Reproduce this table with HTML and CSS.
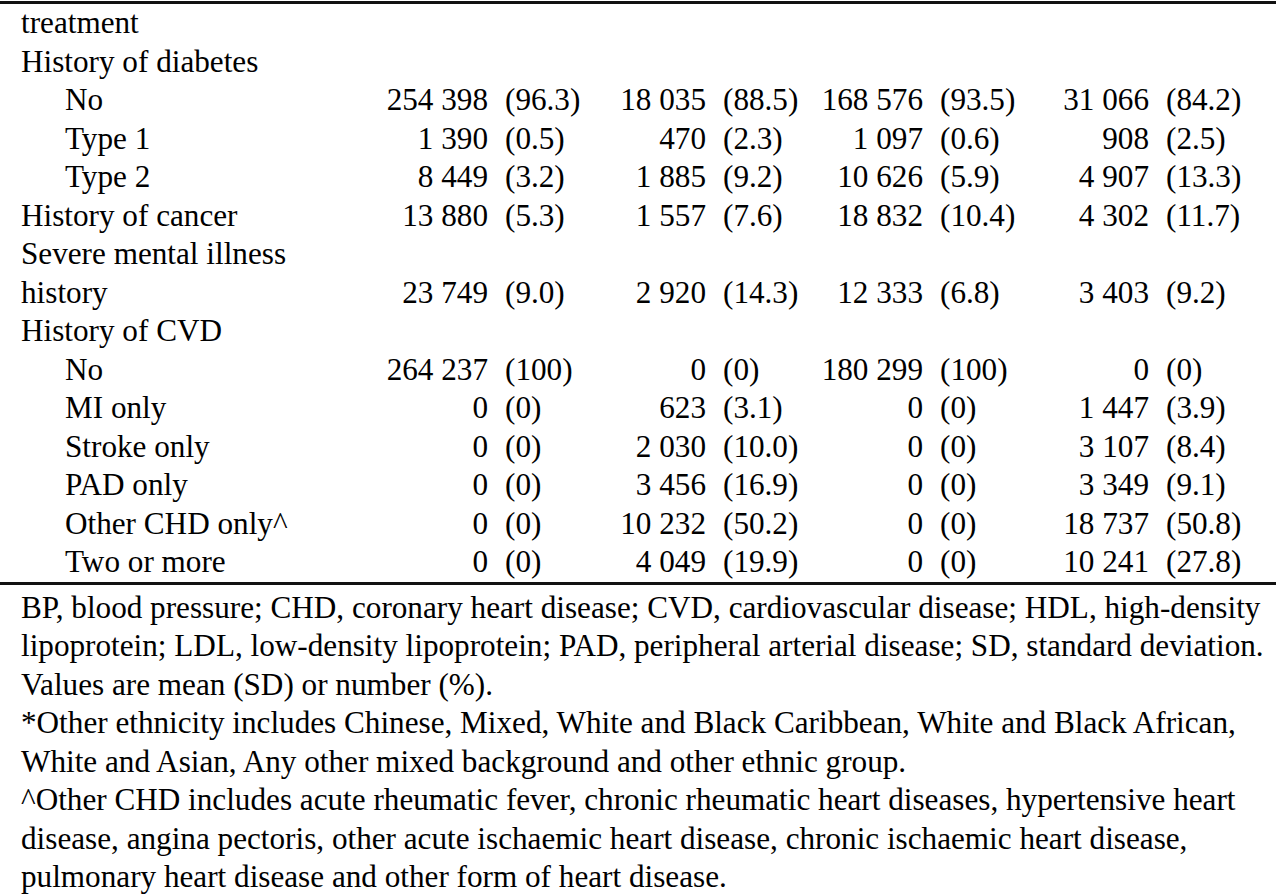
FILE: index.html
```
<!DOCTYPE html>
<html>
<head>
    <title>Baseline characteristics (continued)</title>
    <link rel="stylesheet" href="styles.css">
</head>
<body>
    <table class="data">
        <colgroup>
            <col class="c-label">
            <col class="c-n1"><col class="c-p1">
            <col class="c-n2"><col class="c-p2">
            <col class="c-n3"><col class="c-p3">
            <col class="c-n4"><col class="c-p4">
        </colgroup>
        <tbody>
            <tr><td class="label">treatment</td><td colspan="8"></td></tr>
            <tr><td class="label">History of diabetes</td><td colspan="8"></td></tr>
            <tr>
                <td class="label sub">No</td>
                <td class="num">254 398</td><td class="pct">(96.3)</td>
                <td class="num">18 035</td><td class="pct">(88.5)</td>
                <td class="num">168 576</td><td class="pct">(93.5)</td>
                <td class="num">31 066</td><td class="pct">(84.2)</td>
            </tr>
            <tr>
                <td class="label sub">Type 1</td>
                <td class="num">1 390</td><td class="pct">(0.5)</td>
                <td class="num">470</td><td class="pct">(2.3)</td>
                <td class="num">1 097</td><td class="pct">(0.6)</td>
                <td class="num">908</td><td class="pct">(2.5)</td>
            </tr>
            <tr>
                <td class="label sub">Type 2</td>
                <td class="num">8 449</td><td class="pct">(3.2)</td>
                <td class="num">1 885</td><td class="pct">(9.2)</td>
                <td class="num">10 626</td><td class="pct">(5.9)</td>
                <td class="num">4 907</td><td class="pct">(13.3)</td>
            </tr>
            <tr>
                <td class="label">History of cancer</td>
                <td class="num">13 880</td><td class="pct">(5.3)</td>
                <td class="num">1 557</td><td class="pct">(7.6)</td>
                <td class="num">18 832</td><td class="pct">(10.4)</td>
                <td class="num">4 302</td><td class="pct">(11.7)</td>
            </tr>
            <tr><td class="label">Severe mental illness</td><td colspan="8"></td></tr>
            <tr>
                <td class="label">history</td>
                <td class="num">23 749</td><td class="pct">(9.0)</td>
                <td class="num">2 920</td><td class="pct">(14.3)</td>
                <td class="num">12 333</td><td class="pct">(6.8)</td>
                <td class="num">3 403</td><td class="pct">(9.2)</td>
            </tr>
            <tr><td class="label">History of CVD</td><td colspan="8"></td></tr>
            <tr>
                <td class="label sub">No</td>
                <td class="num">264 237</td><td class="pct">(100)</td>
                <td class="num">0</td><td class="pct">(0)</td>
                <td class="num">180 299</td><td class="pct">(100)</td>
                <td class="num">0</td><td class="pct">(0)</td>
            </tr>
            <tr>
                <td class="label sub">MI only</td>
                <td class="num">0</td><td class="pct">(0)</td>
                <td class="num">623</td><td class="pct">(3.1)</td>
                <td class="num">0</td><td class="pct">(0)</td>
                <td class="num">1 447</td><td class="pct">(3.9)</td>
            </tr>
            <tr>
                <td class="label sub">Stroke only</td>
                <td class="num">0</td><td class="pct">(0)</td>
                <td class="num">2 030</td><td class="pct">(10.0)</td>
                <td class="num">0</td><td class="pct">(0)</td>
                <td class="num">3 107</td><td class="pct">(8.4)</td>
            </tr>
            <tr>
                <td class="label sub">PAD only</td>
                <td class="num">0</td><td class="pct">(0)</td>
                <td class="num">3 456</td><td class="pct">(16.9)</td>
                <td class="num">0</td><td class="pct">(0)</td>
                <td class="num">3 349</td><td class="pct">(9.1)</td>
            </tr>
            <tr>
                <td class="label sub">Other CHD only^</td>
                <td class="num">0</td><td class="pct">(0)</td>
                <td class="num">10 232</td><td class="pct">(50.2)</td>
                <td class="num">0</td><td class="pct">(0)</td>
                <td class="num">18 737</td><td class="pct">(50.8)</td>
            </tr>
            <tr>
                <td class="label sub">Two or more</td>
                <td class="num">0</td><td class="pct">(0)</td>
                <td class="num">4 049</td><td class="pct">(19.9)</td>
                <td class="num">0</td><td class="pct">(0)</td>
                <td class="num">10 241</td><td class="pct">(27.8)</td>
            </tr>
        </tbody>
    </table>

    <div class="notes">
        <p>BP, blood pressure; CHD, coronary heart disease; CVD, cardiovascular disease; HDL, high-density<br>
        lipoprotein; LDL, low-density lipoprotein; PAD, peripheral arterial disease; SD, standard deviation.<br>
        Values are mean (SD) or number (%).</p>
        <p>*Other ethnicity includes Chinese, Mixed, White and Black Caribbean, White and Black African,<br>
        White and Asian, Any other mixed background and other ethnic group.</p>
        <p>^Other CHD includes acute rheumatic fever, chronic rheumatic heart diseases, hypertensive heart<br>
        disease, angina pectoris, other acute ischaemic heart disease, chronic ischaemic heart disease,<br>
        pulmonary heart disease and other form of heart disease.</p>
    </div>
</body>
</html>
```

FILE: styles.css
```
body {
    margin: 0;
    background-color: #fff;
    color: #000;
    font-family: "Liberation Serif", "Times New Roman", serif;
    font-size: 31.2px;
    line-height: 38.5px;
}
.data {
    width: 1276px;
    margin-top: 1px;
    border-collapse: collapse;
    table-layout: fixed;
    border-top: 3px solid #111;
    border-bottom: 3px solid #111;
}
.data td {
    padding: 0;
    white-space: nowrap;
    height: 38.5px;
    vertical-align: middle;
}
.c-label { width: 340px; }
.c-n1 { width: 150px; }
.c-p1 { width: 110px; }
.c-n2 { width: 108px; }
.c-p2 { width: 92px; }
.c-n3 { width: 125px; }
.c-p3 { width: 105px; }
.c-n4 { width: 121px; }
.c-p4 { width: 125px; }
.label {
    padding-left: 21px !important;
}
.label.sub {
    padding-left: 65px !important;
}
.num {
    text-align: right;
    padding-right: 2px !important;
}
.pct {
    text-align: left;
    padding-left: 15px !important;
}
.notes {
    padding: 4px 0 0 21px;
}
.notes p {
    margin: 0;
    white-space: nowrap;
}
```
